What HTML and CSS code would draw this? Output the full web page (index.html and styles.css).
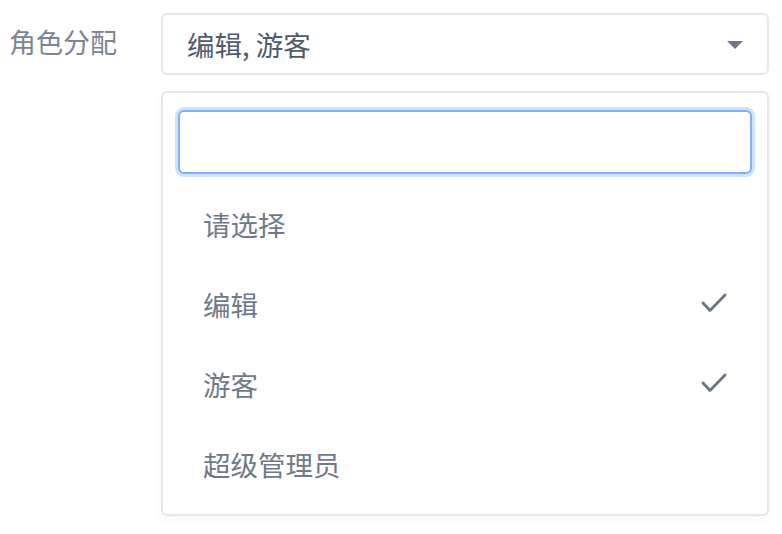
FILE: index.html
```html
<!DOCTYPE html>
<html lang="zh">
<head>
<meta charset="utf-8">
<link rel="stylesheet" href="styles.css">
</head>
<body>
<div class="field">
  <label class="label">角色分配</label>
  <div class="control">
    <div class="select">
      <span class="value">编辑, 游客</span>
      <span class="caret"></span>
    </div>
    <div class="panel">
      <input class="search" type="text">
      <ul class="options">
        <li class="option">请选择</li>
        <li class="option">编辑<svg class="check" width="26" height="20" viewBox="0 0 26 20"><polyline points="2,10 9,17.5 24,2" fill="none" stroke="#6b7684" stroke-width="2.8" stroke-linecap="round" stroke-linejoin="round"/></svg></li>
        <li class="option">游客<svg class="check" width="26" height="20" viewBox="0 0 26 20"><polyline points="2,10 9,17.5 24,2" fill="none" stroke="#6b7684" stroke-width="2.8" stroke-linecap="round" stroke-linejoin="round"/></svg></li>
        <li class="option">超级管理员</li>
      </ul>
    </div>
  </div>
</div>
</body>
</html>
```
FILE: styles.css
```css
* { box-sizing: border-box; }
html, body { margin: 0; padding: 0; background: #fff; }
body {
  font-family: "Noto Sans CJK SC", "Noto Sans", sans-serif;
  width: 782px;
  height: 534px;
  overflow: hidden;
}
.field {
  display: flex;
  padding-top: 13px;
}
.label {
  width: 161px;
  padding-left: 9px;
  padding-top: 11px;
  font-size: 27px;
  line-height: 36px;
  color: #7b8594;
}
.control {
  width: 608px;
  display: flex;
  flex-direction: column;
  gap: 16px;
}
.select {
  height: 62px;
  border: 2px solid #e3e8ee;
  border-radius: 6px;
  display: flex;
  align-items: center;
  justify-content: space-between;
  padding: 0 24px 0 24px;
}
.value {
  font-size: 27.5px;
  color: #4f5b6a;
  line-height: 36px;
}
.caret {
  width: 0;
  height: 0;
  border-left: 8px solid transparent;
  border-right: 8px solid transparent;
  border-top: 8px solid #6e7886;
  margin-top: 1px;
}
.panel {
  height: 425px;
  border: 2px solid #e3e8ee;
  border-radius: 6px;
  box-shadow: 0 3px 10px rgba(0, 0, 0, 0.04);
  padding: 17px 15px 0 15px;
}
.search {
  display: block;
  width: 100%;
  height: 64px;
  border: 2px solid #7fb1f7;
  border-radius: 6px;
  box-shadow: 0 0 0 3px #d2e2fb;
  outline: none;
  background: #fff;
}
.options {
  list-style: none;
  margin: 10px 0 0 0;
  padding: 0;
}
.option {
  height: 80px;
  display: flex;
  align-items: center;
  justify-content: space-between;
  padding: 0 25px 0 25px;
  font-size: 27.5px;
  color: #6f7a89;
}
.check {
  display: block;
  margin-top: -2px;
}
```
